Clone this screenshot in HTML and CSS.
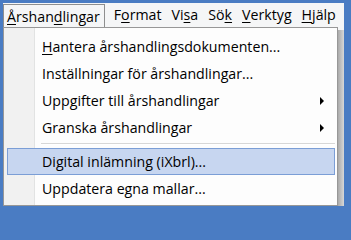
FILE: index.html
```html
<!DOCTYPE html>
<html lang="sv">
<head>
<meta charset="utf-8">
<link rel="stylesheet" href="styles.css">
</head>
<body>
<div class="frame">
  <div class="menubar">
    <span class="mtitle active"><u>Å</u>rshan<u>d</u>lingar</span>
    <span class="mtitle">F<u>o</u>rmat</span>
    <span class="mtitle">Vi<u>s</u>a</span>
    <span class="mtitle">Sö<u>k</u></span>
    <span class="mtitle"><u>V</u>erktyg</span>
    <span class="mtitle"><u>H</u>jälp</span>
  </div>
  <div class="dropwrap">
    <div class="dropdown">
      <div class="gutter"></div>
      <div class="items">
        <div class="item"><span><u>H</u>antera årshandlingsdokumenten...</span></div>
        <div class="item"><span>Inställningar för årshandlingar...</span></div>
        <div class="item"><span>Uppgifter till årshandlingar</span><span class="arrow"></span></div>
        <div class="item"><span>Granska årshandlingar</span><span class="arrow"></span></div>
        <div class="sep"></div>
        <div class="item hl"><span>Digital inlämning (iXbrl)...</span></div>
        <div class="item"><span>Uppdatera egna mallar...</span></div>
      </div>
    </div>
    <div class="shadow"></div>
  </div>
</div>
</body>
</html>
```
FILE: styles.css
```css
html, body {
  margin: 0;
  padding: 0;
  height: 211px;
  overflow: hidden;
}
body {
  width: 351px;
  background: #4a7cc3;
  font-family: "Open Sans", "Noto Sans", sans-serif;
  font-size: 14.2px;
  color: #000;
}
u {
  text-decoration: underline;
  text-underline-offset: 2px;
}
.frame {
  margin: 0 7px 0 3px;
  padding-top: 3px;
  background: #4a7cc3;
  display: flex;
  flex-direction: column;
}
.menubar {
  display: flex;
  align-items: center;
  height: 24px;
  background: #f5f6f7;
}
.mtitle {
  padding: 0 3px 0 5px;
  line-height: 22px;
  border: 1px solid transparent;
}
.mtitle.active {
  border-color: #8e8f8f;
  border-bottom: none;
  padding-left: 3px;
  padding-right: 4px;
  margin-right: 3px;
  line-height: 23px;
  margin-top: 1px;
}
.dropwrap {
  display: flex;
  background: #f5f6f7;
}
.dropdown {
  flex: 1;
  display: flex;
  border: 1px solid #979797;
  background: #fdfdfd;
}
.gutter {
  width: 30px;
  background: #f1f1f1;
  border-right: 1px solid #e2e3e3;
}
.items {
  flex: 1;
  display: flex;
  flex-direction: column;
  padding: 5px 2px 3px 0;
}
.item {
  height: 27px;
  box-sizing: border-box;
  display: flex;
  align-items: center;
  justify-content: space-between;
  padding-right: 10px;
  border: 1px solid transparent;
  margin-left: -28px;
  padding-left: 34px;
}
.item.hl {
  background: #c7d6f0;
  border-color: #7b9ed6;
}
.arrow {
  width: 0;
  height: 0;
  border-top: 4px solid transparent;
  border-bottom: 4px solid transparent;
  border-left: 4px solid #000;
}
.sep {
  height: 1px;
  background: #d7d7d7;
  margin: 2px 0 3px 6px;
  border-bottom: 1px solid #fff;
}
.shadow {
  width: 6px;
  background: linear-gradient(to right, #a9a9a9, #d8d8d8);
  border-top: 3px solid #f5f6f7;
}
```
